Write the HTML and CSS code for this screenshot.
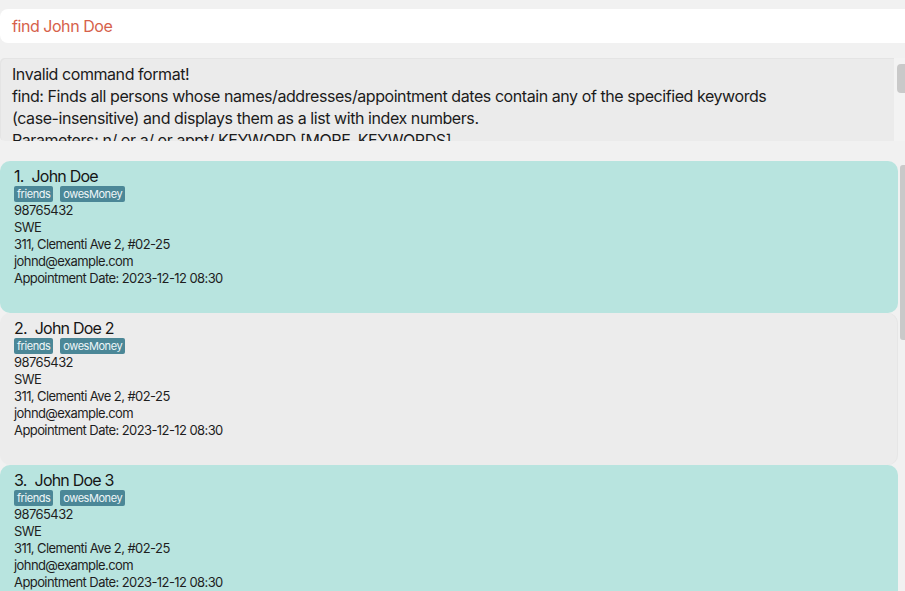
FILE: index.html
```html
<!DOCTYPE html>
<html>
<head>
<meta charset="utf-8">
<link rel="stylesheet" href="styles.css">
</head>
<body>
<div class="app">
  <div class="command">find John Doe</div>
  <div class="result-row">
    <div class="result">
      <div class="result-text">Invalid command format!<br>find: Finds all persons whose names/addresses/appointment dates contain any of the specified keywords<br>(case-insensitive) and displays them as a list with index numbers.<br>Parameters: n/ or a/ or appt/ KEYWORD [MORE_KEYWORDS]...<br>Example: find n/ alice bob charlie</div>
    </div>
    <div class="result-track"><div class="result-thumb"></div></div>
  </div>
  <div class="list-row">
    <div class="list">
      <div class="card odd">
        <div class="title"><span class="idx">1.</span>John Doe</div>
        <div class="tags"><span class="tag">friends</span><span class="tag">owesMoney</span></div>
        <div class="line">98765432</div>
        <div class="line">SWE</div>
        <div class="line">311, Clementi Ave 2, #02-25</div>
        <div class="line">johnd@example.com</div>
        <div class="line">Appointment Date: 2023-12-12 08:30</div>
      </div>
      <div class="card even">
        <div class="title"><span class="idx">2.</span>John Doe 2</div>
        <div class="tags"><span class="tag">friends</span><span class="tag">owesMoney</span></div>
        <div class="line">98765432</div>
        <div class="line">SWE</div>
        <div class="line">311, Clementi Ave 2, #02-25</div>
        <div class="line">johnd@example.com</div>
        <div class="line">Appointment Date: 2023-12-12 08:30</div>
      </div>
      <div class="card odd">
        <div class="title"><span class="idx">3.</span>John Doe 3</div>
        <div class="tags"><span class="tag">friends</span><span class="tag">owesMoney</span></div>
        <div class="line">98765432</div>
        <div class="line">SWE</div>
        <div class="line">311, Clementi Ave 2, #02-25</div>
        <div class="line">johnd@example.com</div>
        <div class="line">Appointment Date: 2023-12-12 08:30</div>
      </div>
    </div>
    <div class="list-track"><div class="list-thumb"></div></div>
  </div>
</div>
</body>
</html>
```
FILE: styles.css
```css
html, body {
  margin: 0;
  padding: 0;
  height: 100%;
  overflow: hidden;
  background: #f1f1f1;
}
.app {
  font-family: Inter, "Noto Sans", sans-serif;
  color: #1b1b1b;
  padding-top: 9px;
}
.command {
  height: 34px;
  background: #ffffff;
  border-radius: 8px 0 0 8px;
  color: #d6614b;
  font-size: 16px;
  line-height: 34px;
  padding-left: 12px;
  letter-spacing: -0.45px;
}
.result-row {
  margin-top: 15px;
  display: flex;
  height: 83px;
}
.result {
  width: 894px;
  background: #ebebeb;
  border-radius: 5px 0 0 5px;
  box-shadow: inset 1px 1px 0 #e4e4e4;
  overflow: hidden;
}
.result-text {
  font-size: 16px;
  line-height: 22px;
  padding: 5px 0 0 12px;
  white-space: nowrap;
  letter-spacing: -0.43px;
}
.result-track {
  flex: 1;
  background: #f3f3f3;
  padding: 6px 0 0 3px;
}
.result-thumb {
  width: 8px;
  height: 29px;
  background: #c9c9c9;
  border-radius: 4px 0 0 4px;
}
.list-row {
  margin-top: 20px;
  display: flex;
}
.list {
  width: 898px;
  display: flex;
  flex-direction: column;
}
.card {
  height: 152px;
  box-sizing: border-box;
  border-radius: 10px;
  padding: 5px 0 0 14px;
}
.card.odd { background: #b8e4df; }
.card.even { background: #ececec; box-shadow: inset -1px 0 0 #e6e6e6; }
.title {
  font-size: 16px;
  line-height: 20px;
  color: #151515;
  letter-spacing: -0.8px;
}
.idx {
  margin-right: 8px;
}
.tags {
  display: flex;
  gap: 7px;
  height: 16px;
}
.tag {
  background: #4b8797;
  color: #eef6f8;
  font-size: 11px;
  line-height: 16px;
  padding: 0 3px;
  border-radius: 2px;
  letter-spacing: -0.45px;
}
.line {
  font-size: 13px;
  line-height: 17px;
  color: #1e1e1e;
  letter-spacing: -0.58px;
}
.list-track {
  flex: 1;
  padding: 4px 0 0 2px;
}
.list-thumb {
  width: 5px;
  height: 175px;
  background: #c9c9c9;
  border-radius: 3px 0 0 3px;
}
```
